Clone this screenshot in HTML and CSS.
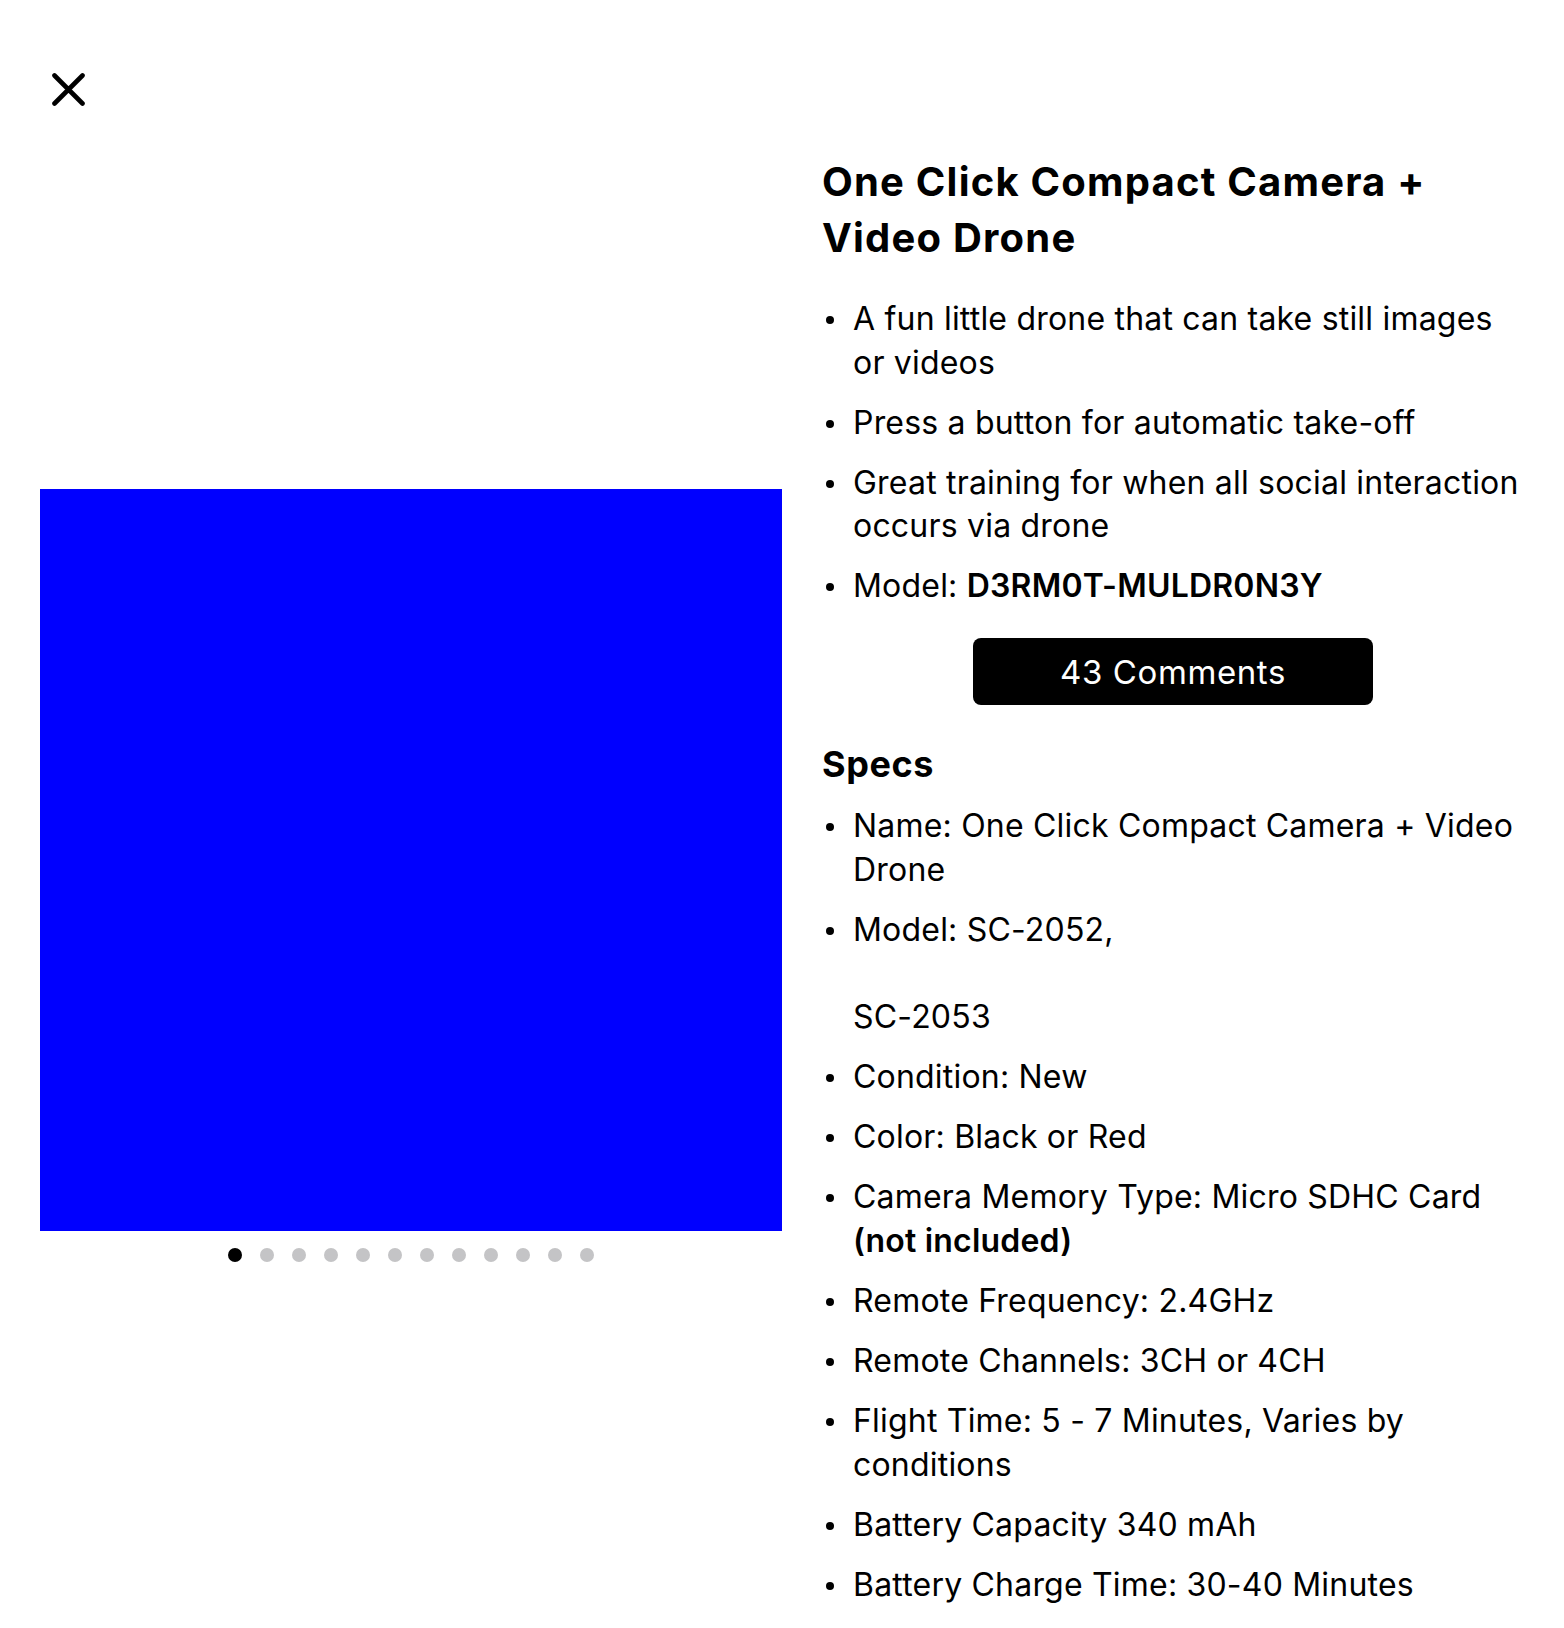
FILE: index.html
```html
<!DOCTYPE html>
<html lang="en">
<head>
<meta charset="utf-8">
<title>One Click Compact Camera + Video Drone</title>
<link rel="stylesheet" href="styles.css">
</head>
<body>
<div class="modal">
  <div class="topbar">
    <button class="close" aria-label="Close">
      <svg width="33" height="33" viewBox="0 0 33 33" fill="none" stroke="#000" stroke-width="4.6" stroke-linecap="round">
        <path d="M2.5 2.5 L30.5 30.5 M30.5 2.5 L2.5 30.5"/>
      </svg>
    </button>
  </div>
  <div class="layout">
    <div class="gallery">
      <div class="photo"></div>
      <div class="dots">
        <span class="dot active"></span><span class="dot"></span><span class="dot"></span><span class="dot"></span><span class="dot"></span><span class="dot"></span><span class="dot"></span><span class="dot"></span><span class="dot"></span><span class="dot"></span><span class="dot"></span><span class="dot"></span>
      </div>
    </div>
    <div class="details">
      <h1 class="title">One Click Compact Camera + Video Drone</h1>
      <ul class="list">
        <li>A fun little drone that can take still images or videos</li>
        <li>Press a button for automatic take-off</li>
        <li>Great training for when all social interaction occurs via drone</li>
        <li>Model: <strong>D3RM0T-MULDR0N3Y</strong></li>
      </ul>
      <div class="actions">
        <button class="comments">43 Comments</button>
      </div>
      <h2 class="specs-title">Specs</h2>
      <ul class="list">
        <li>Name: One Click Compact Camera + Video Drone</li>
        <li>Model: SC-2052,<br><br>SC-2053</li>
        <li>Condition: New</li>
        <li>Color: Black or Red</li>
        <li>Camera Memory Type: Micro SDHC Card <strong>(not included)</strong></li>
        <li>Remote Frequency: 2.4GHz</li>
        <li>Remote Channels: 3CH or 4CH</li>
        <li>Flight Time: 5 - 7 Minutes, Varies by conditions</li>
        <li>Battery Capacity 340 mAh</li>
        <li>Battery Charge Time: 30-40 Minutes</li>
      </ul>
    </div>
  </div>
</div>
</body>
</html>
```

FILE: styles.css
```css
* {
  box-sizing: border-box;
}

html, body {
  margin: 0;
  padding: 0;
  background: #fff;
}

body {
  font-family: Inter, "Noto Sans", "Liberation Sans", sans-serif;
  color: #000;
}

.modal {
  width: 1564px;
}

.topbar {
  padding: 73px 0 0 52px;
  height: 106px;
}

.close {
  display: block;
  width: 33px;
  height: 33px;
  padding: 0;
  border: 0;
  background: none;
  cursor: pointer;
}

.close svg {
  display: block;
}

.layout {
  display: grid;
  grid-template-columns: 782px 782px;
  margin-top: 48px;
}

.gallery {
  padding: 335px 0 0 40px;
}

.photo {
  width: 742px;
  height: 742px;
  background: #0000ff;
}

.dots {
  display: flex;
  justify-content: center;
  gap: 18px;
  margin-top: 17px;
}

.dot {
  width: 14px;
  height: 14px;
  border-radius: 50%;
  background: #c4c4c6;
}

.dot.active {
  background: #000;
}

.details {
  padding: 0 40px;
}

.title {
  margin: 0;
  font-size: 40px;
  line-height: 56px;
  font-weight: 700;
  letter-spacing: 1.2px;
}

.list {
  list-style: none;
  margin: 31px 0 0;
  padding: 0 0 0 31px;
  font-size: 32px;
  line-height: 43.6px;
  letter-spacing: 0.2px;
}

.list li {
  position: relative;
  margin-bottom: 16.5px;
}

.list li::before {
  content: "";
  position: absolute;
  left: -27px;
  top: 19px;
  width: 8px;
  height: 8px;
  border-radius: 50%;
  background: #000;
}

.list li:last-child {
  margin-bottom: 0;
}

.list strong {
  font-weight: 600;
}

.actions {
  display: flex;
  justify-content: center;
  margin-top: 30px;
}

.comments {
  width: 400px;
  height: 67px;
  border: 0;
  border-radius: 8px;
  background: #000;
  color: #fff;
  font-family: inherit;
  font-size: 33px;
  letter-spacing: 0.6px;
  padding: 0;
}

.specs-title {
  margin: 37px 0 0;
  font-size: 36px;
  line-height: 44px;
  font-weight: 700;
  letter-spacing: 0.6px;
}

.specs-title + .list {
  margin-top: 18px;
}
```
